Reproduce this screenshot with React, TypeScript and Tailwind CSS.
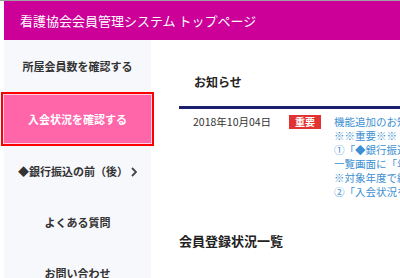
import React from "react";

const font = { fontFamily: '"Noto Sans CJK JP", "Noto Sans", sans-serif' };

export default function App() {
  const lines = [
    "機能追加のお知らせ",
    "※※重要※※",
    "①「◆銀行振込の前（後）」画面に",
    "一覧画面に「年度」の項目を追加しました。",
    "※対象年度で絞り込みができます。",
    "②「入会状況を確認する」画面に",
  ];
  return (
    <div
      className="w-[400px] h-[278px] overflow-hidden bg-white border-t border-[#a0a0a0] flex flex-col"
      style={font}
    >
      <div className="ml-[4px] h-[39px] shrink-0 bg-[#cc0099] flex items-center pl-[16px] text-white text-[13px] whitespace-nowrap">
        看護協会会員管理システム トップページ
      </div>
      <div className="flex flex-1 min-h-0">
        <div className="ml-[4px] w-[147px] shrink-0 bg-[#f7f8fc] flex flex-col text-[11px] font-bold text-[#333]">
          <div className="h-[52px] shrink-0 flex items-center justify-center">所屋会員数を確認する</div>
          <div className="h-[54px] shrink-0 -mx-[3px] border-2 border-[#ff0000] relative z-10">
            <div className="h-full border border-[#ffd0e6] bg-[#ff66aa] text-white flex items-center justify-center">
              入会状況を確認する
            </div>
          </div>
          <div className="h-[51px] shrink-0 flex items-center justify-center gap-[3px]">
            <span>◆銀行振込の前（後）</span>
            <svg width="6" height="10" viewBox="0 0 6 10">
              <polyline points="1,1 5,5 1,9" fill="none" stroke="#444" strokeWidth="1.8" />
            </svg>
          </div>
          <div className="h-[51px] shrink-0 flex items-center justify-center">よくある質問</div>
          <div className="h-[51px] shrink-0 flex items-center justify-center">お問い合わせ</div>
        </div>
        <div className="flex-1 min-w-0 overflow-hidden pl-[28px] pt-[34px]">
          <div className="pl-[15px] text-[12px] font-bold text-[#222] leading-[16px]">お知らせ</div>
          <div className="mt-[16px] border-t-[3px] border-[#1c1f6e]" />
          <div className="flex pl-[14px] pt-[6px] whitespace-nowrap">
            <div className="w-[96px] shrink-0 text-[10.5px] leading-[14px] text-[#333]">2018年10月04日</div>
            <div className="w-[32px] h-[14px] shrink-0 bg-[#e23333] text-white text-[10px] font-bold leading-[14px] text-center">
              重要
            </div>
            <div className="ml-[13px] flex flex-col text-[10.5px] leading-[14px] text-[#3d8fd1]">
              {lines.map((l, i) => (
                <div key={i}>{l}</div>
              ))}
            </div>
          </div>
          <div className="mt-[33px] text-[13px] font-bold text-[#222] leading-[18px]">会員登録状況一覧</div>
        </div>
      </div>
    </div>
  );
}
